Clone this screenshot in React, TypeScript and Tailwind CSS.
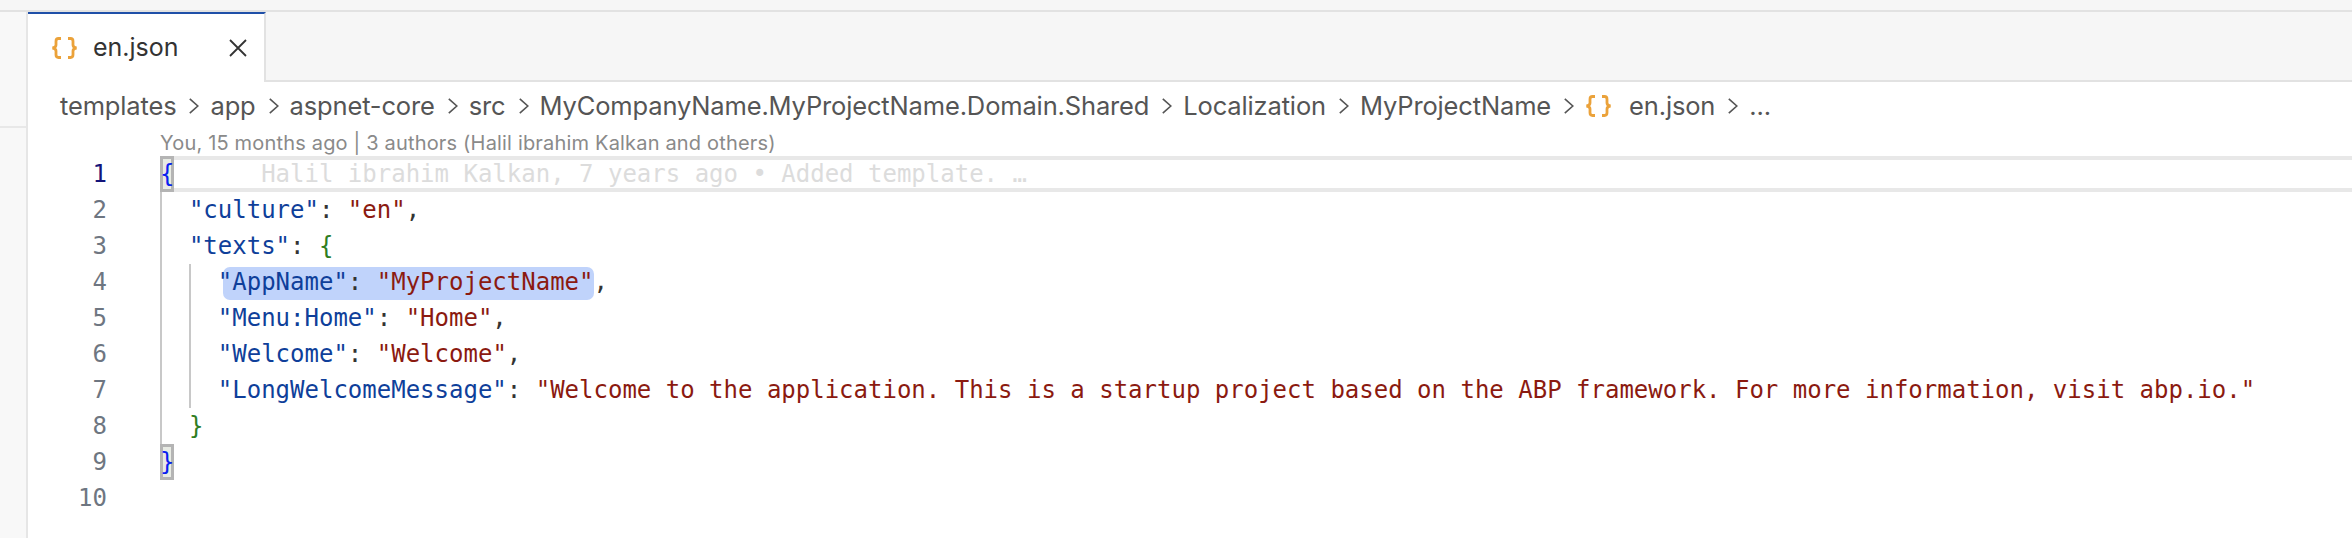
const crumbs = ['templates', 'app', 'aspnet-core', 'src', 'MyCompanyName.MyProjectName.Domain.Shared', 'Localization', 'MyProjectName']

function JsonIcon({ className }: { className?: string }) {
  return (
    <svg viewBox="0 0 27 22" className={className} fill="none" stroke="#eba23a" strokeWidth="2.8">
      <path d="M10 1.500H7.500C5.500 1.500 5 2.500 5 4.200V8c0 1.500-1.200 2.600-3.500 3 2.300.4 3.500 1.500 3.500 3v3.800C5 19.500 5.500 20.500 7.500 20.500H10" />
      <path d="M17 1.500h2.500c2 0 2.500 1 2.500 2.700V8c0 1.500 1.200 2.600 3.500 3-2.300.4-3.500 1.500-3.500 3v3.800c0 1.700-.5 2.700-2.500 2.700H17" />
    </svg>
  )
}

function Chevron() {
  return (
    <svg viewBox="0 0 10 16" className="w-[10px] h-[16px] ml-[13px] mr-[11px] shrink-0" fill="none" stroke="#555" strokeWidth="1.6">
      <path d="M.8 .8l8 7.200-8 7.200" />
    </svg>
  )
}

const key = 'text-[#0f3f9a]'
const str = 'text-[#8b1a10]'
const punct = 'text-[#333]'

function Line({ indent = 0, children }: { indent?: number; children?: React.ReactNode }) {
  return (
    <div className="h-[36px] leading-[36px] whitespace-pre">
      {' '.repeat(indent)}
      {children}
    </div>
  )
}

function Pair({ k, v }: { k: string; v: string }) {
  return (
    <>
      <span className={key}>"{k}"</span>
      <span className={punct}>: </span>
      <span className={str}>"{v}"</span>
      <span className={punct}>,</span>
    </>
  )
}

export default function App() {
  return (
    <div className="w-[2352px] h-[538px] bg-white overflow-hidden flex flex-col font-['Inter',sans-serif]">
      <div className="h-[12px] shrink-0 bg-[#f6f6f6] border-b-[2px] border-[#e2e2e2]" />
      <div className="flex flex-1 min-h-0">
        {/* Activity bar edge */}
        <div className="w-[28px] shrink-0 bg-[#f8f8f8] border-r-[2px] border-[#e6e6e6]">
          <div className="h-[116px] border-b-[2px] border-[#e8e8e8]" />
        </div>

        <div className="flex-1 min-w-0 flex flex-col">
          {/* Tabs */}
          <div className="h-[70px] shrink-0 flex bg-[#f6f6f6] border-b-[2px] border-[#e2e2e2]">
            <div className="w-[238px] h-[70px] bg-white border-t-[2px] border-t-[#1f4fa8] border-r-[2px] border-r-[#e2e2e2] flex items-center pl-[23px]">
              <JsonIcon className="w-[27px] h-[22px]" />
              <span className="ml-[15px] text-[25px] text-[#333]">en.json</span>
              <svg viewBox="0 0 18 18" className="w-[18px] h-[18px] ml-[50px]" fill="none" stroke="#333" strokeWidth="1.8">
                <path d="M1 1l16 16M17 1L1 17" />
              </svg>
            </div>
          </div>

          {/* Breadcrumbs */}
          <div className="h-[48px] shrink-0 flex items-center pl-[32px] text-[25.5px] text-[#555] tracking-[-0.15px]">
            {crumbs.map((c) => (
              <div key={c} className="flex items-center">
                <span>{c}</span>
                <Chevron />
              </div>
            ))}
            <JsonIcon className="w-[27px] h-[22px] mr-[17px]" />
            <span>en.json</span>
            <Chevron />
            <span>...</span>
          </div>

          {/* Editor */}
          <div className="flex-1 flex min-h-0">
            <div className="w-[79px] shrink-0 pt-[26px] text-right font-['DejaVu_Sans_Mono',monospace] text-[24px] text-[#6e7681]">
              {[1, 2, 3, 4, 5, 6, 7, 8, 9, 10].map((n) => (
                <div key={n} className={n === 1 ? 'h-[36px] leading-[36px] text-[#14147a]' : 'h-[36px] leading-[36px]'}>
                  {n}
                </div>
              ))}
            </div>

            <div className="ml-[53px] flex-1 min-w-0">
              <div className="h-[26px] leading-[26px] text-[20px] tracking-[0.18px] text-[#8a8a8a] whitespace-pre">
                You, 15 months ago | 3 authors (Halil ibrahim Kalkan and others)
              </div>
              <div className="relative font-['DejaVu_Sans_Mono',monospace] text-[24px]">
                {/* indent guides */}
                <div className="absolute left-0 top-[36px] h-[252px] w-[2px] bg-[#c8c8c8]" />
                <div className="absolute left-[29px] top-[108px] h-[144px] w-[2px] bg-[#c8c8c8]" />
                {/* current line */}
                <div className="absolute left-0 right-0 top-0 h-[36px] border-y-[4px] border-[#e8e8e8]" />
                {/* bracket match */}
                <div className="absolute left-0 top-0 w-[14px] h-[36px] bg-[#e8ebe4] border-[3px] border-[#b4b4b4]" />
                <div className="absolute left-0 top-[288px] w-[14px] h-[36px] bg-[#e8ebe4] border-[3px] border-[#b4b4b4]" />
                {/* selection */}
                <div className="absolute left-[63px] top-[111px] w-[371px] h-[33px] rounded-[7px] bg-[#c0d3fb]" />

                <div className="relative">
                  <Line>
                    <span className="text-[#0a1ef0]">{'{'}</span>
                    <span className="text-[#dcdcdc]">{'      Halil ibrahim Kalkan, 7 years ago • Added template. …'}</span>
                  </Line>
                  <Line indent={2}>
                    <span className={key}>"culture"</span>
                    <span className={punct}>: </span>
                    <span className={str}>"en"</span>
                    <span className={punct}>,</span>
                  </Line>
                  <Line indent={2}>
                    <span className={key}>"texts"</span>
                    <span className={punct}>: </span>
                    <span className="text-[#2f7d1f]">{'{'}</span>
                  </Line>
                  <Line indent={4}><Pair k="AppName" v="MyProjectName" /></Line>
                  <Line indent={4}><Pair k="Menu:Home" v="Home" /></Line>
                  <Line indent={4}><Pair k="Welcome" v="Welcome" /></Line>
                  <Line indent={4}>
                    <span className={key}>"LongWelcomeMessage"</span>
                    <span className={punct}>: </span>
                    <span className={str}>"Welcome to the application. This is a startup project based on the ABP framework. For more information, visit abp.io."</span>
                  </Line>
                  <Line indent={2}>
                    <span className="text-[#2f7d1f]">{'}'}</span>
                  </Line>
                  <Line>
                    <span className="text-[#0a1ef0]">{'}'}</span>
                  </Line>
                  <Line />
                </div>
              </div>
            </div>
          </div>
        </div>
      </div>
    </div>
  )
}
